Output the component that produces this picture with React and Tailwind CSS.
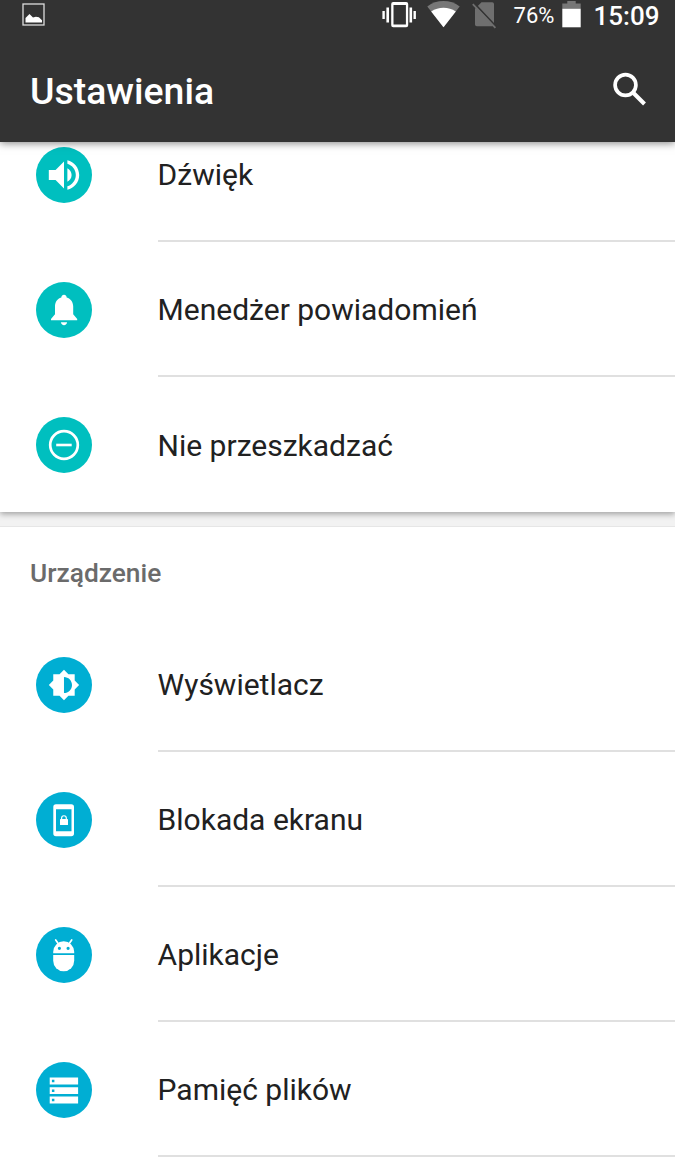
const TEAL = 'bg-[#00bfbf]'
const BLUE = 'bg-[#00aed3]'

function SoundIcon() {
  return (
    <g transform="translate(7.75 7.75) scale(1.6875)">
      <path d="M3 9v6h4l5 5V4L7 9H3zm13.5 3c0-1.77-1.02-3.29-2.5-4.03v8.05c1.48-.73 2.5-2.25 2.5-4.02zM14 3.23v2.06c2.89.86 5 3.54 5 6.71s-2.11 5.85-5 6.71v2.06c4.01-.91 7-4.49 7-8.77s-2.99-7.86-7-8.77z" />
    </g>
  )
}

function BellIcon() {
  return (
    <>
      <path d="M28 12.8c1.5 0 2.5 1 2.7 2.8 4 1.2 6.5 4.7 6.5 9v7.7l4 4.7v1.3H15v-1.3l4-4.700v-7.700c0-4.300 2.300-7.800 6.300-9 .2-1.800 1.200-2.800 2.700-2.800z" />
      <path d="M24.9 40.300h6.200c-.2 1.700-1.500 2.900-3.100 2.900s-2.900-1.200-3.100-2.900z" />
    </>
  )
}

function DndIcon() {
  return (
    <g fill="none" stroke="currentColor">
      <circle cx="28" cy="28" r="13.8" strokeWidth="2.7" />
      <path d="M20.2 28h15.5" strokeWidth="2.6" />
    </g>
  )
}

function BrightnessIcon() {
  return (
    <g transform="translate(11.9 11.9) scale(1.34)">
      <path d="M20 15.31L23.31 12 20 8.69V4h-4.69L12 .69 8.69 4H4v4.69L.69 12 4 15.31V20h4.69L12 23.31 15.31 20H20v-4.69zM12 18V6c3.31 0 6 2.69 6 6s-2.69 6-6 6z" />
    </g>
  )
}

function LockIcon() {
  return (
    <>
      <path fillRule="evenodd" d="M20 12.3h15.3a2.7 2.7 0 012.7 2.7v26.6a2.7 2.7 0 01-2.7 2.7H20a2.7 2.7 0 01-2.7-2.7V15a2.7 2.7 0 012.7-2.7zM20 17.2v22h15.5v-22z" />
      <rect x="24" y="27" width="8" height="6" rx=".6" />
      <path d="M25.6 27.5v-1.4a2.3 2.3 0 014.7 0v1.4" fill="none" stroke="currentColor" strokeWidth="1.2" />
    </>
  )
}

function AndroidIcon() {
  return (
    <>
      <path fillRule="evenodd" d="M17.2 26.2v-1.4a10.5 10.5 0 0121 0v1.4zM23.4 19.7a1.6 1.6 0 100 3.2 1.6 1.6 0 000-3.2zm8.7 0a1.6 1.6 0 100 3.2 1.6 1.6 0 000-3.2z" />
      <path d="M19.7 12.9l2.8 4M35.7 12.9l-2.8 4" stroke="currentColor" strokeWidth="1.7" strokeLinecap="round" />
      <path d="M17.2 28h21v5.8a10.5 10.5 0 01-21 0z" />
    </>
  )
}

function StorageIcon() {
  return (
    <path fillRule="evenodd" d="M13.7 15.6h28.4v6.8H13.7zm2.2 2.2v2.5h2.5v-2.5zM13.7 25.2h28.4v6.8H13.7zm2.2 2.2v2.5h2.5v-2.5zM13.7 34.6h28.4v6.8H13.7zm2.2 2.2v2.5h2.5v-2.5z" />
  )
}

const soundItems = [
  { label: 'Dźwięk', icon: SoundIcon },
  { label: 'Menedżer powiadomień', icon: BellIcon },
  { label: 'Nie przeszkadzać', icon: DndIcon },
]

const deviceItems = [
  { label: 'Wyświetlacz', icon: BrightnessIcon },
  { label: 'Blokada ekranu', icon: LockIcon },
  { label: 'Aplikacje', icon: AndroidIcon },
  { label: 'Pamięć plików', icon: StorageIcon },
]

function Row({ label, icon: Icon, color, divider }) {
  return (
    <div className="flex h-[135px] shrink-0 pl-[35.7px]">
      <div className={`mt-10 size-14 shrink-0 rounded-full text-white ${color}`}>
        <svg viewBox="0 0 56 56" fill="currentColor" className="size-14">
          <Icon />
        </svg>
      </div>
      <div className={`ml-[65.9px] flex flex-1 items-center border-b-2 ${divider ? 'border-[#e0e0e0]' : 'border-transparent'}`}>
        <span className={`text-[30px] leading-9 text-[#212121] ${divider ? 'pt-[3px]' : 'pt-[5px]'}`}>{label}</span>
      </div>
    </div>
  )
}

function StatusBar() {
  return (
    <div className="flex h-[30px] items-start pl-[22px] pr-[15.5px]">
      <svg viewBox="0 0 23 30" className="h-[30px] w-[23px]">
        <rect x="1" y="4" width="21" height="21" fill="none" stroke="#ddd" strokeWidth="1.3" />
        <path d="M3.5 22.5v-4.500l4-4 3.500 3.500 2.900-.8 3 .6 3.100 2.900v2.300z" fill="#fff" />
      </svg>
      <svg viewBox="0 0 34 30" fill="#fff" className="ml-auto h-[30px] w-[34px]">
        <path fillRule="evenodd" d="M11.2 2h13a2 2 0 012 2v21.3a2 2 0 01-2 2h-13a2 2 0 01-2-2V4a2 2 0 012-2zm.3 3v19.5h12.4V5z" />
        <path d="M4.4 7.5H7v15H4.4zM.4 11h2.4v8H.4zM27.5 7.5h2.6v15h-2.6zM31.5 11h2.4v8h-2.4z" />
      </svg>
      <svg viewBox="0 0 34 30" className="ml-2.5 h-[30px] w-[34px]">
        <path d="M17.5 27.3L1.3 6.5C6 2.8 11.500 1 17.500 1s11.500 1.800 16.200 5.500z" fill="#777" />
        <path d="M17.5 27.3L5.2 11.5C9 9 13 7.800 17.500 7.800s8.500 1.200 12.300 3.700z" fill="#fff" />
      </svg>
      <svg viewBox="0 0 26 30" className="ml-3 h-[30px] w-[26px]">
        <path d="M9.500 2.300h10.700a1.800 1.800 0 011.800 1.800v20.400a1.800 1.800 0 01-1.800 1.800H4.800A1.800 1.800 0 013 24.500V8.800z" fill="#6f6f6f" />
        <path d="M1.800 2.800l22.600 24" stroke="#333" strokeWidth="1.8" />
        <path d="M.8 4.200l22.600 23.600" stroke="#6f6f6f" strokeWidth="1.8" />
      </svg>
      <span className="ml-4 w-[48px] pt-1 text-[22px] leading-6 text-white">76%</span>
      <svg viewBox="0 0 19 30" className="h-[30px] w-[19px]">
        <path d="M.3 9V3.500h5V1h8.400v2.500h5V9z" fill="#777" />
        <path d="M.3 8.800h18.400v18.500H.3z" fill="#fff" />
      </svg>
      <span className="ml-[13px] pt-0.5 text-[26px] font-medium leading-7 text-white">15:09</span>
    </div>
  )
}

export default function App() {
  return (
    <div className="flex h-[1158px] w-[675px] flex-col overflow-hidden bg-[#f2f2f2] font-['Roboto',sans-serif]">
      <header className="relative z-10 h-[142px] shrink-0 bg-[#333] shadow-[0_1px_8px_rgba(0,0,0,0.5)]">
        <StatusBar />
        <div className="flex h-28 items-center justify-between pl-[30px] pr-[29px]">
          <h1 className="pt-3 text-[37.4px] font-medium leading-none text-white">Ustawienia</h1>
          <svg viewBox="0 0 33 34" fill="none" stroke="#fff" className="mt-1.5 h-[34px] w-[33px]">
            <circle cx="12.5" cy="13" r="10.4" strokeWidth="3.7" />
            <path d="M20.5 21L31.5 32" strokeWidth="4" />
          </svg>
        </div>
      </header>

      {/* list is scrolled, so the first row starts under the header */}
      <section className="-mt-[35px] shrink-0 bg-white shadow-[0_2px_6px_rgba(0,0,0,0.35)]">
        {soundItems.map((item, i) => (
          <Row key={item.label} {...item} color={TEAL} divider={i < soundItems.length - 1} />
        ))}
      </section>

      <section className="mt-3.5 shrink-0 border-t border-[#e6e6e6] bg-white pb-4">
        <h2 className="h-[90px] pl-[30px] pt-[30px] text-[26.3px] font-medium leading-8 text-[#6b6b6b]">Urządzenie</h2>
        {deviceItems.map((item) => (
          <Row key={item.label} {...item} color={BLUE} divider />
        ))}
      </section>
    </div>
  )
}
